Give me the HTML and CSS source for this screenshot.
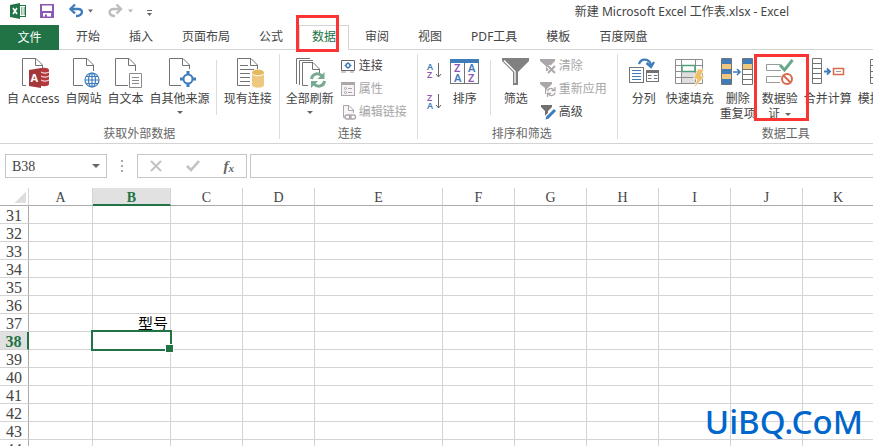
FILE: index.html
```html
<!DOCTYPE html>
<html lang="zh-CN">
<head>
<meta charset="utf-8">
<title>新建 Microsoft Excel 工作表.xlsx - Excel</title>
<link rel="stylesheet" href="styles.css">
</head>
<body>
<header class="titlebar">
  <div class="quick">
    <svg class="logo" width="16" height="16" viewBox="0 0 16 16" aria-hidden="true">
      <rect x="9" y="2.500" width="6.500" height="11" fill="#fff" stroke="#217346"/>
      <path d="M11 5h1.500M13.500 5H15M11 7h1.500M13.500 7H15M11 9h1.500M13.500 9H15M11 11h1.500M13.500 11H15" stroke="#217346"/>
      <path d="M0 2L10 0V16L0 14Z" fill="#217346"/>
      <path d="M3 5L7 11M7 5L3 11" stroke="#fff" stroke-width="1.600"/>
    </svg>
    <button class="tool" aria-label="保存">
      <svg width="14" height="14" viewBox="0 0 14 14"><path fill="#8c59b3" fill-rule="evenodd" d="M0 0H14V14H0ZM2 1.500V7H12V1.500ZM3 9V12.500H5V10.500H7V12.500H11V9Z"/></svg>
    </button>
    <button class="tool undo" aria-label="撤消">
      <svg width="24" height="14" viewBox="0 0 24 14"><path d="M1.500 5H9C15 5 14 12 7 12" fill="none" stroke="#3f7cba" stroke-width="2.400"/><path d="M6 .5L1.500 5L6 9.500" fill="none" stroke="#3f7cba" stroke-width="2.400"/><path d="M19 5.500h5l-2.500 3z" fill="#666"/></svg>
    </button>
    <button class="tool redo" aria-label="恢复">
      <svg width="25" height="14" viewBox="0 0 25 14"><path d="M13 5H6C-.5 5 .5 12 7 12" fill="none" stroke="#bdbdbd" stroke-width="2.400"/><path d="M8.500 .5L13 5L8.500 9.500" fill="none" stroke="#bdbdbd" stroke-width="2.400"/><path d="M20 5.500h5l-2.500 3z" fill="#b5b5b5"/></svg>
    </button>
    <button class="tool more" aria-label="自定义快速访问工具栏">
      <svg width="6" height="8" viewBox="0 0 6 8"><path d="M0 1.500H5" stroke="#666"/><path d="M0 4h5l-2.500 3z" fill="#666"/></svg>
    </button>
  </div>
  <h1 class="doc">新建 Microsoft Excel 工作表.xlsx - Excel</h1>
</header>

<nav class="tabs">
  <button class="tab file">文件</button>
  <button class="tab">开始</button>
  <button class="tab">插入</button>
  <button class="tab">页面布局</button>
  <button class="tab">公式</button>
  <button class="tab active">数据<span class="mark mark-tab"></span></button>
  <button class="tab">审阅</button>
  <button class="tab">视图</button>
  <button class="tab">PDF工具</button>
  <button class="tab">模板</button>
  <button class="tab">百度网盘</button>
</nav>

<section class="ribbon">
  <div class="group g-get">
    <div class="items">
      <button class="big">
        <svg width="32" height="32" viewBox="0 0 32 32"><path d="M9 28.500H5.500V1.500H19L25.500 8V11M18.500 1.500V8.500H25.500" fill="none" stroke="#737373"/><path d="M22 13c0-3 10-3 10 0V27c0 3-10 3-10 0z" fill="#b5383d"/><path d="M24 15c2 1.500 6 1.500 8 0M24 19c2 1.500 6 1.500 8 0M24 23c2 1.500 6 1.500 8 0" stroke="#fff" fill="none"/><path d="M12 13L24 11V31L12 29Z" fill="#a4373a"/><text x="13.500" y="25" font-size="11" font-weight="700" fill="#fff">A</text></svg>
        <span>自 Access</span>
      </button>
      <button class="big">
        <svg width="32" height="32" viewBox="0 0 32 32"><path d="M15 28.500H5.500V1.500H19L25.500 8V14M18.500 1.500V8.500H25.500" fill="none" stroke="#737373"/><g fill="#fff" stroke="#3f7cba" stroke-width="1.200"><circle cx="24" cy="23" r="7"/><ellipse cx="24" cy="23" rx="3.500" ry="7"/><path d="M24 16V30M17 23H31M18 19.500H30M18 26.500H30"/></g></svg>
        <span>自网站</span>
      </button>
      <button class="big">
        <svg width="32" height="32" viewBox="0 0 32 32"><path d="M18 28.500H5.500V1.500H19L25.500 8V14M18.500 1.500V8.500H25.500" fill="none" stroke="#737373"/><path d="M19.500 16.500H31.500V30.500H19.500Z" fill="#fff" stroke="#8a8a8a"/><path d="M22 20.500H29M22 23.500H29M22 26.500H29" stroke="#8a8a8a"/></svg>
        <span>自文本</span>
      </button>
      <button class="big">
        <svg width="32" height="32" viewBox="0 0 32 32"><path d="M17 28.500H5.500V1.500H19L25.500 8V12M18.500 1.500V8.500H25.500" fill="none" stroke="#737373"/><path d="M24 14V30M16 22H32" stroke="#3f7cba" stroke-width="3"/><circle cx="24" cy="22" r="4.500" fill="#fff" stroke="#3f7cba" stroke-width="2"/></svg>
        <span>自其他来源</span><i class="arrow"></i>
      </button>
      <span class="rule"></span>
      <button class="big">
        <svg width="32" height="32" viewBox="0 0 32 32"><path d="M18 28.500H5.500V1.500H19L25.500 8V12M18.500 1.500V8.500H25.500M8 8.500H16M8 12.500H22M8 16.500H18M8 20.500H18M8 24.500H18" fill="none" stroke="#737373"/><path d="M20 16V28c0 3.500 12 3.500 12 0V16z" fill="#edc87e"/><ellipse cx="26" cy="15.500" rx="6" ry="3" fill="#e6b95f"/><path d="M20 16.500c1 3 11 3 12 0" fill="none" stroke="#fff"/></svg>
        <span>现有连接</span>
      </button>
    </div>
    <h2>获取外部数据</h2>
  </div>

  <div class="group g-link">
    <div class="items">
      <button class="big">
        <svg width="32" height="32" viewBox="0 0 32 32"><path d="M2.500 27V1.500H16M5.500 28V3.500H19M14 28.500H8.500V5.500H19L25.500 12V16M18.500 5.500V12.500H25.500" fill="none" stroke="#737373"/><path d="M17.500 22C18 17 24 15 28 19M30.500 24C30 29 24 31 20 27" fill="none" stroke="#76aa92" stroke-width="3"/><path d="M30.500 15v7h-7zM17 31v-7h7z" fill="#76aa92"/></svg>
        <span>全部刷新</span><i class="arrow"></i>
      </button>
      <div class="stack">
        <button class="small">
          <svg width="16" height="16" viewBox="0 0 16 16"><path d="M1.500 2.500H14.500V12.500H1.500Z" fill="#fff" stroke="#666"/><circle cx="8" cy="7.500" r="2" fill="#fff" stroke="#3f7cba" stroke-width="1.500"/><path d="M8 4V6M8 9.500V11M4.500 7.500H6M10 7.500H11.500" stroke="#3f7cba"/><path d="M1 14H6M10 14H14" stroke="#999"/></svg>连接</button>
        <button class="small" disabled>
          <svg width="16" height="16" viewBox="0 0 16 16"><rect x="1.500" y="1.500" width="13" height="13" fill="#f5f1f5" stroke="#aaa6aa"/><path d="M1 2.500H15" stroke="#aaa6aa" stroke-width="3"/><path d="M8 7.500H12M8 11.500H12" stroke="#aaa6aa"/><circle cx="5.500" cy="7.500" r="1" fill="none" stroke="#aaa6aa"/><circle cx="5.500" cy="11.500" r="1" fill="none" stroke="#aaa6aa"/></svg>属性</button>
        <button class="small" disabled>
          <svg width="16" height="16" viewBox="0 0 16 16"><path d="M5 13.500H3.500V1.500H9L13.500 6V9M8.500 1.500V6.500H13" fill="#f8f4f8" stroke="#aaa6aa"/><g fill="none" stroke="#aaa6aa" stroke-width="1.400"><rect x="5" y="11" width="6" height="4" rx="2"/><rect x="9.500" y="11" width="6" height="4" rx="2"/></g></svg>编辑链接</button>
      </div>
    </div>
    <h2>连接</h2>
  </div>

  <div class="group g-sort">
    <div class="items">
      <div class="az">
        <button aria-label="升序"><svg width="14" height="18" viewBox="0 0 14 18"><text x="0" y="8" font-size="9" fill="#3f7cba" font-weight="600">A</text><text x="0" y="16" font-size="9" fill="#8c59b3" font-weight="600">Z</text><path d="M11.500 1V15M9 12L11.500 15L14 12" fill="none" stroke="#666"/></svg></button>
        <button aria-label="降序"><svg width="14" height="18" viewBox="0 0 14 18"><text x="0" y="8" font-size="9" fill="#8c59b3" font-weight="600">Z</text><text x="0" y="16" font-size="9" fill="#3f7cba" font-weight="600">A</text><path d="M11.500 1V15M9 12L11.500 15L14 12" fill="none" stroke="#666"/></svg></button>
      </div>
      <button class="big">
        <svg width="32" height="32" viewBox="0 0 32 32"><rect x="1.500" y="4.500" width="28" height="22" fill="#fff" stroke="#737373"/><path d="M15.500 6V26" stroke="#737373"/><rect x="1" y="2" width="29" height="4" fill="#3f7cba"/><g font-size="11" font-weight="600"><text x="5" y="15" fill="#8c59b3">Z</text><text x="5" y="25" fill="#3f7cba">A</text><text x="19" y="15" fill="#3f7cba">A</text><text x="19" y="25" fill="#8c59b3">Z</text></g></svg>
        <span>排序</span>
      </button>
      <span class="rule"></span>
      <button class="big filter">
        <svg width="32" height="32" viewBox="0 0 32 32"><path d="M2 1H29V4L18 15V28H13V15L2 4Z" fill="#808080"/><path d="M4 3.500L15 14.500V26" fill="none" stroke="#fff" stroke-width="1.300"/></svg>
        <span>筛选</span>
      </button>
      <div class="stack">
        <button class="small" disabled>
          <svg width="16" height="16" viewBox="0 0 16 16"><path d="M0 1H15V3L10 8V13H6V8L0 3Z" fill="#aaa6aa"/><path d="M8 8L15 15M15 8L8 15" stroke="#fff" stroke-width="4"/><path d="M8 8L15 15M15 8L8 15" stroke="#aaa6aa" stroke-width="1.800"/></svg>清除</button>
        <button class="small" disabled>
          <svg width="16" height="16" viewBox="0 0 16 16"><path d="M0 1H12V3L8 7V13H5V7L0 3Z" fill="#aaa6aa"/><circle cx="11" cy="11" r="5" fill="#fff"/><path d="M7.500 10.500C8 7 12 6.500 14 9M15 11.500C14.500 15 10 15.500 8.500 13M15 6V9.500H11.500M7.500 16V12.500H11" fill="none" stroke="#aaa6aa" stroke-width="1.300"/></svg>重新应用</button>
        <button class="small">
          <svg width="16" height="16" viewBox="0 0 16 16"><path d="M1 1H12V3L8 7V12H5V7L1 3Z" fill="#707070"/><path d="M6 15L14.500 6.500" stroke="#fff" stroke-width="6"/><path d="M7.500 13.500L15 6" stroke="#3f7cba" stroke-width="3"/><path d="M5.500 15.500L6.500 12L9 14.500Z" fill="#3f7cba"/></svg>高级</button>
      </div>
    </div>
    <h2>排序和筛选</h2>
  </div>

  <div class="group g-data">
    <div class="items">
      <button class="big">
        <svg width="32" height="32" viewBox="0 0 32 32"><path d="M11 7C13 1 21 1 23 8" fill="none" stroke="#3f7cba" stroke-width="2.400"/><path d="M18.500 6L23 10L26 5" fill="none" stroke="#3f7cba" stroke-width="2.400"/><rect x="1.500" y="10.500" width="14" height="15" fill="#fff" stroke="#737373"/><path d="M4 13.500H13M4 16.500H13M4 19.500H13M4 22.500H13" stroke="#3f7cba"/><rect x="18.500" y="13.500" width="12" height="11" fill="#fff" stroke="#737373"/><path d="M18 14.500H31" stroke="#737373" stroke-width="3"/><path d="M20 18.500H23.500M26 18.500H29.500M20 21.500H23.500M26 21.500H29.500" stroke="#737373"/></svg>
        <span>分列</span>
      </button>
      <button class="big">
        <svg width="32" height="32" viewBox="0 0 32 32"><path d="M8 15H22V26H8Z" fill="#dedede"/><path d="M1.500 2.500H28.500V26.500H1.500ZM1.500 8.500H28M1.500 14.500H28M1.500 20.500H28M7.500 2V26M21.500 2V26" fill="none" stroke="#8c8c8c"/><rect x="8" y="8.500" width="13" height="6" fill="#fff" stroke="#4f9f7b" stroke-width="1.500"/><path d="M24 12H30L27 19H31L20 31L23 22H19Z" fill="#edc06d" stroke="#fff" stroke-width=".7"/></svg>
        <span>快速填充</span>
      </button>
      <button class="big dedupe">
        <svg width="32" height="32" viewBox="0 0 32 32"><path d="M0 2H10V27H0ZM22 2H32V27H22Z" fill="#fff"/><path d="M0 2H10V7H0ZM0 12H10V17H0ZM0 22H10V27H0ZM22 2H32V7H22Z" fill="#3f7cba"/><path d="M0 7H10V12H0ZM0 17H10V22H0ZM22 7H32V12H22Z" fill="#edc87e"/><path d="M.5 1.500H10.500V27.500H.5ZM21.500 1.500H31.500V27.500H21.500ZM21.500 12.500H31.500M21.500 17.500H31.500M21.500 22.500H31.500" fill="none" stroke="#737373"/><path d="M12 15H19M16 12L19 15L16 18" fill="none" stroke="#3f7cba" stroke-width="1.600"/></svg>
        <span>删除<br>重复项</span>
      </button>
      <button class="big valid">
        <svg width="32" height="32" viewBox="0 0 32 32"><path d="M16 7.500H2.500V13.500H17M17 19.500H2.500V25.500H16" fill="none" stroke="#999"/><path d="M16 8L20.500 13L28.500 3" fill="none" stroke="#69a78a" stroke-width="3"/><circle cx="23" cy="22" r="5" fill="#fff" stroke="#d8694c" stroke-width="2"/><path d="M19.500 18.500L26.500 25.500" stroke="#d8694c" stroke-width="2"/></svg>
        <span>数据验<br>证<i class="arrow inline"></i></span><span class="mark mark-btn"></span>
      </button>
      <button class="big">
        <svg width="32" height="32" viewBox="0 0 32 32"><path d="M.5 1.500H9.500V26.500H.5ZM.5 6.500H9.500M.5 11.500H9.500M.5 16.500H9.500M.5 21.500H9.500" fill="none" stroke="#737373"/><path d="M12 14.500H18M15 11.500L18 14.500L15 17.500" fill="none" stroke="#3f7cba" stroke-width="1.800"/><rect x="21.500" y="11.500" width="10" height="6" fill="#fff" stroke="#d8694c" stroke-width="1.500"/><path d="M24 14.500H29" stroke="#999"/></svg>
        <span>合并计算</span>
      </button>
      <button class="big">
        <svg width="32" height="32" viewBox="0 0 32 32"><path d="M4.500 2.500H28.500V26.500H4.500ZM4.500 8.500H28M4.500 14.500H28M4.500 20.500H28M12.500 2V26M20.500 2V26" fill="none" stroke="#737373"/></svg>
        <span>模拟分析</span><i class="arrow"></i>
      </button>
      <button class="big">
        <svg width="32" height="32" viewBox="0 0 32 32"><path d="M4.500 4.500H14.500V14.500H4.500ZM18.500 16.500H28.500V26.500H18.500ZM14 9.500H23.500V16" fill="none" stroke="#737373"/></svg>
        <span>关系</span>
      </button>
    </div>
    <h2>数据工具</h2>
  </div>
</section>

<div class="formula">
  <label class="namebox"><input type="text" value="B38" aria-label="名称框"><i class="arrow"></i></label>
  <span class="grip"><i></i><i></i><i></i></span>
  <div class="actions">
    <button aria-label="取消"><svg width="12" height="12" viewBox="0 0 12 12"><path d="M1 1L11 11M11 1L1 11" stroke="#c3c3c3" stroke-width="2"/></svg></button>
    <button aria-label="输入"><svg width="14" height="12" viewBox="0 0 14 12"><path d="M1 6L5 10L13 1" fill="none" stroke="#c3c3c3" stroke-width="2.600"/></svg></button>
    <button class="fx" aria-label="插入函数">f<sub>x</sub></button>
  </div>
  <input class="entry" type="text" aria-label="编辑栏">
</div>

<main class="sheet">
  <table>
    <colgroup><col class="c-head"><col class="c-a"><col class="c-b"><col class="c-n"><col class="c-n"><col class="c-e"><col class="c-n"><col class="c-n"><col class="c-n"><col class="c-n"><col class="c-n"><col></colgroup>
    <thead><tr><th class="corner"></th><th>A</th><th class="on">B</th><th>C</th><th>D</th><th>E</th><th>F</th><th>G</th><th>H</th><th>I</th><th>J</th><th>K</th></tr></thead>
    <tbody>
      <tr><th>31</th><td></td><td></td><td></td><td></td><td></td><td></td><td></td><td></td><td></td><td></td><td></td></tr>
      <tr><th>32</th><td></td><td></td><td></td><td></td><td></td><td></td><td></td><td></td><td></td><td></td><td></td></tr>
      <tr><th>33</th><td></td><td></td><td></td><td></td><td></td><td></td><td></td><td></td><td></td><td></td><td></td></tr>
      <tr><th>34</th><td></td><td></td><td></td><td></td><td></td><td></td><td></td><td></td><td></td><td></td><td></td></tr>
      <tr><th>35</th><td></td><td></td><td></td><td></td><td></td><td></td><td></td><td></td><td></td><td></td><td></td></tr>
      <tr><th>36</th><td></td><td></td><td></td><td></td><td></td><td></td><td></td><td></td><td></td><td></td><td></td></tr>
      <tr><th>37</th><td></td><td class="val">型号</td><td></td><td></td><td></td><td></td><td></td><td></td><td></td><td></td><td></td></tr>
      <tr><th class="on">38</th><td></td><td class="cur"><span class="cursor"></span></td><td></td><td></td><td></td><td></td><td></td><td></td><td></td><td></td><td></td></tr>
      <tr><th>39</th><td></td><td></td><td></td><td></td><td></td><td></td><td></td><td></td><td></td><td></td><td></td></tr>
      <tr><th>40</th><td></td><td></td><td></td><td></td><td></td><td></td><td></td><td></td><td></td><td></td><td></td></tr>
      <tr><th>41</th><td></td><td></td><td></td><td></td><td></td><td></td><td></td><td></td><td></td><td></td><td></td></tr>
      <tr><th>42</th><td></td><td></td><td></td><td></td><td></td><td></td><td></td><td></td><td></td><td></td><td></td></tr>
      <tr><th>43</th><td></td><td></td><td></td><td></td><td></td><td></td><td></td><td></td><td></td><td></td><td></td></tr>
      <tr><th>44</th><td></td><td></td><td></td><td></td><td></td><td></td><td></td><td></td><td></td><td></td><td></td></tr>
    </tbody>
  </table>
  <div class="watermark">UiBQ.CoM</div>
</main>
</body>
</html>
```
FILE: styles.css
```css
* { box-sizing: border-box; }

body {
  margin: 0;
  height: 100vh;
  display: flex;
  flex-direction: column;
  overflow: hidden;
  background: #fff;
  color: #444;
  font: 12px/16px "Noto Sans", "Noto Sans CJK SC", sans-serif;
}

button {
  margin: 0;
  padding: 0;
  border: 0;
  background: none;
  color: inherit;
  font: inherit;
  white-space: nowrap;
}

h1, h2 { margin: 0; font: inherit; }
svg { display: block; flex: none; overflow: visible; }

/* Title bar */
.titlebar { display: flex; justify-content: space-between; height: 25px; flex: none; }
.quick { display: flex; align-items: center; padding-left: 10px; height: 22px; }
.tool { margin-left: 14px; }
.undo, .redo { margin-left: 15px; }
.more { margin-left: 14px; padding-top: 3px; }
.doc { padding: 4px 84px 0 0; white-space: nowrap; }

/* Tabs */
.tabs { display: flex; gap: 5px; height: 25px; flex: none; border-bottom: 1px solid #d4d4d4; }
.tab { padding: 0 12px; height: 24px; }
.file { width: 59px; height: 25px; background: #217346; color: #fff; }
.active {
  position: relative;
  height: 25px;
  margin: 0 -1px;
  padding-bottom: 2px;
  border: 1px solid #d4d4d4;
  border-bottom: 0;
  background: #fff;
  color: #217346;
}
.mark { position: absolute; border: 3px solid #fb3434; z-index: 2; pointer-events: none; }
.mark-tab { left: -4px; top: -11px; width: 43px; height: 37px; }
.mark-btn { left: -5px; top: 0; width: 55px; height: 67px; }

/* Ribbon */
.ribbon { display: flex; height: 94px; flex: none; padding-top: 4px; border-bottom: 1px solid #d4d4d4; overflow: hidden; }
.group {
  display: flex;
  flex-direction: column;
  flex: none;
  height: 85px;
  padding-left: 3px;
  border-right: 1px solid #dcdcdc;
}
.items { display: flex; height: 72px; flex: none; }
.group h2 { text-align: center; color: #666; }
.big {
  position: relative;
  display: flex;
  flex-direction: column;
  align-items: center;
  padding: 3px 3px 0;
}
.big svg { margin-bottom: 1px; }
.big .arrow { margin-top: 5px; }
.arrow { border: 3px solid transparent; border-top-color: #666; border-bottom: 0; }
.big .arrow.inline { display: inline-block; margin: 0 0 2px 5px; }
.rule { width: 1px; height: 55px; margin: 6px 4px 0 3px; background: #dcdcdc; }
.big > span:not(.mark) { line-height: 15px; padding-top: 1px; }
.stack { display: flex; flex-direction: column; padding: 0 10px 0 3px; }
.small { display: flex; align-items: center; gap: 3px; height: 23px; }
.small:disabled { color: #a6a6a6; }
.g-get { padding: 0 4px; }
.g-sort { padding-left: 9px; }
.g-sort .rule { margin: 6px 6px 0; }
.g-sort .stack { padding-left: 5px; }
.g-data { padding-left: 7px; }
.g-data .big { min-width: 38px; }
.dedupe svg { margin-right: 2px; }
.az { display: flex; flex-direction: column; gap: 13px; padding: 8px 5px 0 0; }

/* Formula bar */
.formula { display: flex; align-items: stretch; height: 24px; flex: none; margin: 10px 0 10px 5px; }
.namebox { display: flex; align-items: center; width: 102px; border: 1px solid #c6c6c6; padding-right: 6px; }
.namebox .arrow { border-width: 4px 4px 0; }
input { min-width: 0; border: 0; outline: 0; background: none; color: #444; font: 14px "Liberation Serif", serif; }
.namebox input { flex: 1; padding: 2px 0 0 6px; }
.grip { display: flex; flex-direction: column; justify-content: center; gap: 3px; width: 30px; padding-left: 14px; }
.grip i { width: 2px; height: 2px; background: #aaa; }
.actions { display: flex; align-items: center; justify-content: space-between; width: 110px; padding: 0 12px; border: 1px solid #c6c6c6; }
.fx { font: italic 700 15px/16px "Liberation Serif", serif; color: #666; }
.fx sub { font-size: 11px; line-height: 1px; vertical-align: -1px; }
.entry { flex: 1; margin-left: 3px; border: 1px solid #c6c6c6; border-right: 0; }

/* Sheet */
.sheet { position: relative; flex: 1; overflow: hidden; }
table { width: 100%; table-layout: fixed; border-collapse: separate; border-spacing: 0; }
.c-head { width: 29px; }
.c-a { width: 64px; }
.c-b { width: 78px; }
.c-n { width: 72px; }
.c-e { width: 128px; }
th, td { height: 18px; padding: 0; border-right: 1px solid #d4d4d4; border-bottom: 1px solid #d4d4d4; }
tr > :last-child { border-right: 0; }
th { font: 16px/15px "Liberation Serif", serif; text-align: center; padding-top: 2px; }
thead th { font-size: 14px; line-height: 14px; padding-top: 3px; border-bottom-color: #ababab; }
tbody th { border-right-color: #ababab; }
thead th.on { background: #e1e1e1; color: #217346; font-weight: 700; border-bottom: 2px solid #217346; line-height: 13px; }
tbody th.on { background: #e1e1e1; color: #217346; font-weight: 700; border-right: 2px solid #217346; }
.corner { background: linear-gradient(135deg, transparent 50%, #dedede 50%) 15px 4px / 11px 11px no-repeat; }
.val { font: 15px/17px "Noto Sans CJK SC", sans-serif; color: #000; text-align: right; padding-right: 2px; }
.cur { position: relative; }
.cursor { position: absolute; inset: -2px; border: 2px solid #217346; }
.cursor::after {
  content: "";
  position: absolute;
  right: -4px;
  bottom: -4px;
  width: 7px;
  height: 7px;
  border: 1px solid #fff;
  background: #217346;
}
.watermark {
  position: absolute;
  right: 10px;
  bottom: 2px;
  font-size: 33px;
  line-height: 44px;
  font-weight: 500;
  color: #06c;
  text-shadow: 0 0 1px #fff;
}
```
